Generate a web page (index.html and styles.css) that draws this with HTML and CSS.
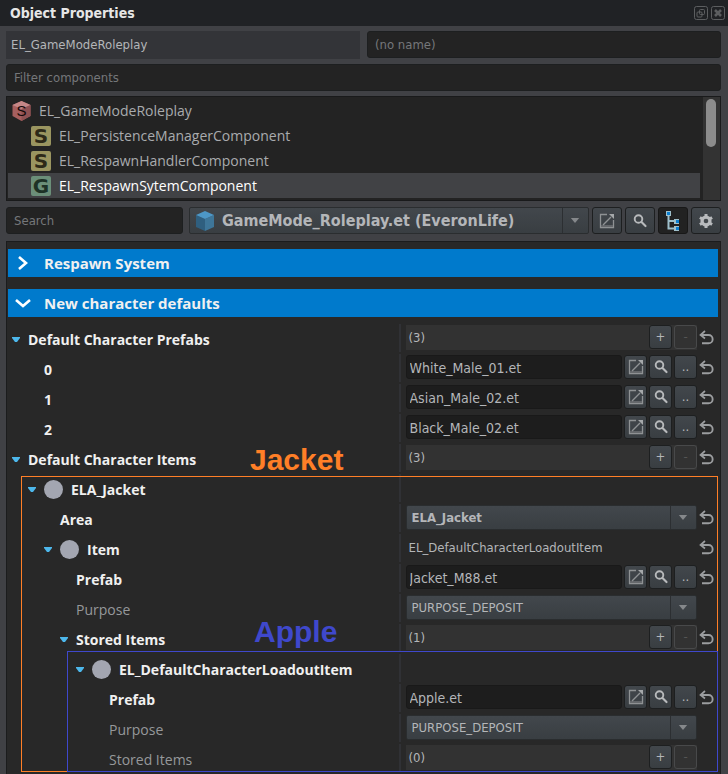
FILE: index.html
```
<!DOCTYPE html>
<html lang="en">
<head>
<meta charset="utf-8">
<title>Object Properties</title>
<link rel="stylesheet" href="styles.css">
</head>
<body>
<svg class="defs" aria-hidden="true">
  <symbol id="i-open" viewBox="0 0 16 16"><path d="M8 1.500H1.500v13h13V7" fill="none" stroke="#8f9294" stroke-width="1.300"/><path d="M2 13h12" stroke="#6c6f72" stroke-width="1.600"/><path d="M4 12l3-3M7 9l5-5" stroke="#8f9294" stroke-width="1.400"/><path d="M10 1h5v5z" fill="#a5a8aa"/></symbol>
  <symbol id="i-search" viewBox="0 0 16 16"><circle cx="6.500" cy="6" r="3.800" fill="none" stroke="#b8babc" stroke-width="1.900"/><path d="M9.500 9l4 4" stroke="#b8babc" stroke-width="2.200" stroke-linecap="round"/></symbol>
  <symbol id="i-undo" viewBox="0 0 16 16"><path d="M2 5h7.500a4 4 0 0 1 0 8.300H3" fill="none" stroke="#9b9d9f" stroke-width="1.900"/><path d="M6 1L1.500 5 6 8.500" fill="none" stroke="#9b9d9f" stroke-width="1.700"/></symbol>
  <symbol id="i-down" viewBox="0 0 10 6"><path d="M0 0h10L5 6z" fill="#85888b"/></symbol>
  <symbol id="i-toggle" viewBox="0 0 8 5"><path d="M0 0h8v1L5 5H3L0 1z" fill="#4db8ec"/></symbol>
</svg>

<header class="titlebar">
  <h1>Object Properties</h1>
  <button class="win" aria-label="Float"><svg viewBox="0 0 14 14"><rect x=".5" y=".5" width="13" height="13" rx="2"/><rect x="5.5" y="3.5" width="5" height="5" rx="1"/><rect x="3" y="6" width="5" height="5" rx="1"/></svg></button>
  <button class="win" aria-label="Close"><svg viewBox="0 0 14 14"><rect x=".5" y=".5" width="13" height="13" rx="2"/><path d="M4 4l6 6M10 4l-6 6" stroke-width="2.6"/></svg></button>
</header>

<main class="body">
  <div class="names">
    <div class="classname">EL_GameModeRoleplay</div>
    <input class="field" type="text" placeholder="(no name)" aria-label="Name">
  </div>
  <input class="field filter" type="text" placeholder="Filter components" aria-label="Filter components">

  <div class="components">
    <ul>
      <li class="root"><svg class="hex" viewBox="0 0 18 20"><path d="M9 0l9 4v11l-9 5-9-5V4z" fill="#a65f5f"/><path d="M9 0l9 4-9 4-9-4z" fill="#c58787"/><path d="M9 8l9-4v11l-9 5z" fill="#8f5153"/><text x="9" y="15">S</text></svg>EL_GameModeRoleplay</li>
      <li><span class="tile">S</span>EL_PersistenceManagerComponent</li>
      <li><span class="tile">S</span>EL_RespawnHandlerComponent</li>
      <li class="selected"><span class="tile green">G</span>EL_RespawnSytemComponent</li>
    </ul>
    <div class="scroll"><div class="thumb"></div></div>
  </div>

  <div class="toolbar">
    <input class="field search" type="text" placeholder="Search" aria-label="Search">
    <div class="combo big">
      <svg class="cube" viewBox="0 0 18 20"><path d="M0 4l9 4v12l-9-4z" fill="#2f5f7f"/><path d="M18 4L9 8v12l9-4z" fill="#3e7699"/><path d="M9 0l9 4-9 4-9-4z" fill="#4d97c6"/></svg>
      <select aria-label="Prefab"><option>GameMode_Roleplay.et (EveronLife)</option></select>
      <svg class="down"><use href="#i-down"/></svg>
    </div>
    <button class="btn tool" aria-label="Open"><svg><use href="#i-open"/></svg></button>
    <button class="btn tool" aria-label="Find"><svg><use href="#i-search"/></svg></button>
    <button class="btn tool on" aria-label="Tree view"><svg class="tree" viewBox="0 0 14 20"><path d="M2.5 3v14.500H9M2.500 10H9" fill="none" stroke="#9fc0cc" stroke-width="2"/><path d="M0 0h5v5H0zM8 8h5v5H8zM8 15h5v5H8z" fill="#9fc0cc"/><path d="M1 1h3v3H1zM10 9h3v3h-3zM10 16h3v3h-3z" fill="#0a7fd2"/></svg></button>
    <button class="btn tool" aria-label="Settings"><svg viewBox="0 0 16 16"><circle cx="8" cy="8" r="4" fill="none" stroke="#b8babd" stroke-width="3.2"/><path d="M8 1v14M1.900 4.500l12.200 7M1.900 11.500l12.200-7" stroke="#b8babd" stroke-width="3"/><circle cx="8" cy="8" r="2.300" fill="#42474b"/></svg></button>
  </div>

  <section class="panel">
    <button class="section"><svg viewBox="0 0 16 16"><path d="M4 2l7 6-7 6"/></svg>Respawn System</button>
    <button class="section"><svg viewBox="0 0 16 16"><path d="M1 5l7 6 7-6"/></svg>New character defaults</button>

    <div class="props">
      <div class="row"><div class="name d0"><button class="toggle" aria-label="Collapse"><svg><use href="#i-toggle"/></svg></button>Default Character Prefabs</div>
        <div class="value"><div class="count"><span>(3)</span><button class="btn">+</button><button class="btn" disabled>-</button></div><button class="undo" aria-label="Reset"><svg><use href="#i-undo"/></svg></button></div></div>
      <div class="row"><label class="name d2" for="p0">0</label>
        <div class="value"><div class="file"><input id="p0" type="text" value="White_Male_01.et"><button class="btn" aria-label="Open"><svg><use href="#i-open"/></svg></button><button class="btn" aria-label="Find"><svg><use href="#i-search"/></svg></button><button class="btn dots">..</button></div><button class="undo" aria-label="Reset"><svg><use href="#i-undo"/></svg></button></div></div>
      <div class="row"><label class="name d2" for="p1">1</label>
        <div class="value"><div class="file"><input id="p1" type="text" value="Asian_Male_02.et"><button class="btn" aria-label="Open"><svg><use href="#i-open"/></svg></button><button class="btn" aria-label="Find"><svg><use href="#i-search"/></svg></button><button class="btn dots">..</button></div><button class="undo" aria-label="Reset"><svg><use href="#i-undo"/></svg></button></div></div>
      <div class="row"><label class="name d2" for="p2">2</label>
        <div class="value"><div class="file"><input id="p2" type="text" value="Black_Male_02.et"><button class="btn" aria-label="Open"><svg><use href="#i-open"/></svg></button><button class="btn" aria-label="Find"><svg><use href="#i-search"/></svg></button><button class="btn dots">..</button></div><button class="undo" aria-label="Reset"><svg><use href="#i-undo"/></svg></button></div></div>
      <div class="row"><div class="name d0"><button class="toggle" aria-label="Collapse"><svg><use href="#i-toggle"/></svg></button>Default Character Items</div>
        <div class="value"><div class="count"><span>(3)</span><button class="btn">+</button><button class="btn" disabled>-</button></div><button class="undo" aria-label="Reset"><svg><use href="#i-undo"/></svg></button></div></div>

      <div class="group jacket">
        <strong class="note">Jacket</strong>
        <div class="row"><div class="name d1"><button class="toggle" aria-label="Collapse"><svg><use href="#i-toggle"/></svg></button><i class="dot"></i>ELA_Jacket</div><div class="value"></div></div>
        <div class="row"><label class="name d3" for="area">Area</label>
          <div class="value"><div class="combo strong"><select id="area"><option>ELA_Jacket</option></select><svg class="down"><use href="#i-down"/></svg></div><button class="undo" aria-label="Reset"><svg><use href="#i-undo"/></svg></button></div></div>
        <div class="row"><div class="name d2"><button class="toggle" aria-label="Collapse"><svg><use href="#i-toggle"/></svg></button><i class="dot"></i>Item</div>
          <div class="value"><div class="plain">EL_DefaultCharacterLoadoutItem</div><button class="undo" aria-label="Reset"><svg><use href="#i-undo"/></svg></button></div></div>
        <div class="row"><label class="name d4" for="p3">Prefab</label>
          <div class="value"><div class="file"><input id="p3" type="text" value="Jacket_M88.et"><button class="btn" aria-label="Open"><svg><use href="#i-open"/></svg></button><button class="btn" aria-label="Find"><svg><use href="#i-search"/></svg></button><button class="btn dots">..</button></div><button class="undo" aria-label="Reset"><svg><use href="#i-undo"/></svg></button></div></div>
        <div class="row"><label class="name unset d4" for="purpose1">Purpose</label>
          <div class="value"><div class="combo"><select id="purpose1"><option>PURPOSE_DEPOSIT</option></select><svg class="down"><use href="#i-down"/></svg></div></div></div>
        <div class="row"><div class="name d3"><button class="toggle" aria-label="Collapse"><svg><use href="#i-toggle"/></svg></button>Stored Items</div>
          <div class="value"><div class="count"><span>(1)</span><button class="btn">+</button><button class="btn" disabled>-</button></div><button class="undo" aria-label="Reset"><svg><use href="#i-undo"/></svg></button></div></div>

        <div class="group apple">
          <strong class="note">Apple</strong>
          <div class="row"><div class="name d4"><button class="toggle" aria-label="Collapse"><svg><use href="#i-toggle"/></svg></button><i class="dot"></i>EL_DefaultCharacterLoadoutItem</div><div class="value"></div></div>
          <div class="row"><label class="name d6" for="p4">Prefab</label>
            <div class="value"><div class="file"><input id="p4" type="text" value="Apple.et"><button class="btn" aria-label="Open"><svg><use href="#i-open"/></svg></button><button class="btn" aria-label="Find"><svg><use href="#i-search"/></svg></button><button class="btn dots">..</button></div><button class="undo" aria-label="Reset"><svg><use href="#i-undo"/></svg></button></div></div>
          <div class="row"><label class="name unset d6" for="purpose2">Purpose</label>
            <div class="value"><div class="combo"><select id="purpose2"><option>PURPOSE_DEPOSIT</option></select><svg class="down"><use href="#i-down"/></svg></div></div></div>
          <div class="row"><div class="name unset d6">Stored Items</div>
            <div class="value"><div class="count"><span>(0)</span><button class="btn">+</button><button class="btn" disabled>-</button></div></div></div>
        </div>
      </div>
    </div>
  </section>
</main>
</body>
</html>
```
FILE: styles.css
```
:root {
  --ui: "DejaVu Sans Condensed", "DejaVu Sans", sans-serif;
  --tree: "Open Sans", "Noto Sans", sans-serif;
  --edge: #1d1f20;
  --face: linear-gradient(#42474c, #393e42);
}
* { box-sizing: border-box; }
body { margin: 0; background: #404145; color: #b4b6b9; font: 13px/16px var(--ui); }
button, input, select { font: inherit; color: inherit; margin: 0; padding: 0; border: 0; background: none; outline: 0; }
svg { display: block; }
.defs { display: none; }

.titlebar { display: flex; align-items: center; gap: 3px; height: 26px; padding: 0 3px 0 10px; background: #202225; }
.titlebar h1 { flex: 1; margin: 0; color: #e6e6e6; font: bold 14px/20px var(--ui); }
.win svg { width: 14px; height: 14px; fill: none; stroke: #5c5e60; }

.body { padding: 5px 7px 0 6px; }
.names { display: grid; grid-template-columns: 1fr 1fr; gap: 7px; height: 28px; }
.classname { padding: 0 5px; background: #333438; line-height: 28px; }
.field { width: 100%; height: 27px; padding: 0 7px; background: #232323; border: 1px solid var(--edge); border-radius: 3px; }
.field::placeholder { color: #75777a; opacity: 1; }
.filter { display: block; margin-top: 5px; }

.components { display: flex; gap: 3px; margin-top: 5px; height: 105px; background: #232323; border: 1px solid #191a1b; }
.components ul { flex: 1; margin: 0; padding: 1px 0 0 1px; list-style: none; font: 14px/25px var(--tree); }
.components li { display: flex; align-items: center; gap: 8px; height: 25px; padding-left: 23px; color: #a9abae; }
.components .root { padding-left: 4px; }
.components .selected { background: #414245; color: #fff; }
.hex { width: 19px; height: 20px; }
.hex text { font: 15px "Liberation Sans", sans-serif; text-anchor: middle; fill: #140808; }
.tile { width: 20px; height: 20px; border-radius: 2px; background: #9a9560; color: #2d2918; font: bold 20px/20px "DejaVu Sans", sans-serif; text-align: center; }
.green { background: #6b8f79; color: #1d3226; }
.scroll { width: 17px; padding: 2px 3px; background: #333; }
.thumb { width: 10px; height: 48px; border-radius: 5px; background: #8c8c8c; }

.toolbar { display: flex; gap: 3px; margin: 6px 0 7px; }
.search { flex: 0 0 177px; margin-right: 3px; }
.btn { display: flex; align-items: center; justify-content: center; background: var(--face); border: 1px solid var(--edge); border-radius: 3px; }
.btn:disabled { background: #323232; border-color: #48494a; color: #555; }
.btn svg { width: 16px; height: 16px; }
.tool { flex: 0 0 30px; height: 27px; }
.tool.on { background: #222; border-color: #181818; }
.tool .tree { width: 14px; height: 20px; }
.combo { display: flex; align-items: center; height: 25px; background: var(--face); border: 1px solid #2a2d2f; border-radius: 2px; }
.combo select { flex: 1; align-self: stretch; min-width: 0; padding-left: 5px; appearance: none; border-right: 1px solid #2c2f32; }
.combo option { background: #333; }
.combo .down { width: 10px; height: 5px; margin: 0 8px 0 7px; }
.strong { font-weight: bold; }
.big { flex: 1; height: 27px; font: bold 16px/22px var(--ui); }
.cube { width: 18px; height: 20px; margin-left: 6px; }
.combo.big select { padding-left: 8px; }

.panel { padding: 7px 2px 0 1px; background: #282828; border: 1px solid #1b1c1d; border-bottom: 0; }
.section { display: flex; align-items: center; gap: 13px; width: 100%; height: 28px; margin-bottom: 12px; padding-left: 7px; background: #007acc; color: #f0f0f0; font: bold 15px/20px var(--tree); }
.section svg { width: 16px; height: 16px; fill: none; stroke: #fff; stroke-width: 2.6; }

.props { margin-top: -5px; }
.row { display: grid; grid-template-columns: 11fr 9fr; height: 30px; }
.name { display: flex; align-items: center; padding-top: 1px; color: #f0f0f0; font: bold 14px/20px var(--tree); white-space: nowrap; }
.unset { color: #96989b; font-weight: normal; }
.d0 { padding-left: 4px; }
.d1 { padding-left: 20px; }
.d2 { padding-left: 36px; }
.d3 { padding-left: 52px; }
.d4 { padding-left: 68px; }
.d6 { padding-left: 101px; }
.toggle { width: 16px; }
.toggle svg { width: 8px; height: 5px; }
.dot { width: 19px; height: 19px; margin-right: 8px; border-radius: 50%; background: #a3a6b1; }
.value { display: grid; grid-template-columns: 1fr 16px; gap: 2px; height: 28px; padding: 1px 3px 0 5px; border-left: 2px solid #303135; }
.file, .count { display: flex; gap: 2px; height: 25px; }
.value .btn { flex: 0 0 23px; height: 24px; }
.file input { flex: 1; min-width: 0; height: 24px; padding: 1px 3px 0; background: #1d1d1d; border: 1px solid #191919; border-radius: 3px; font-size: 14px; }
.count { background: #323232; }
.count span { flex: 1; padding-left: 3px; line-height: 26px; }
.plain { padding-left: 3px; line-height: 26px; }
.undo { height: 25px; }
.undo svg { width: 16px; height: 16px; }

/* Highlight frames drawn over the rows they enclose */
.group { position: relative; }
.group::after { content: ""; position: absolute; inset: 2px 0; pointer-events: none; border: 1px solid #ff7f27; }
.jacket::after { left: 13px; }
.apple::after { z-index: 1; left: 59px; top: -3px; border-color: #3f48cc; }
.note { position: absolute; z-index: 1; font: bold 30px/34px "Liberation Sans", sans-serif; }
.jacket > .note { left: 242px; top: -31px; color: #ff7f27; }
.apple > .note { left: 246px; top: -39px; color: #3f48cc; }
```
